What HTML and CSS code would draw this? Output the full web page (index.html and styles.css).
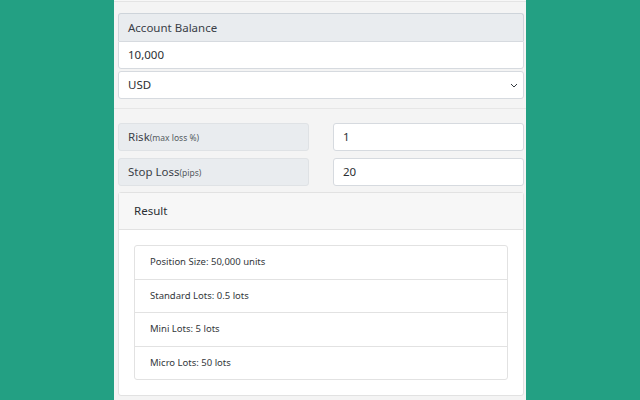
FILE: index.html
```html
<!DOCTYPE html>
<html>
<head>
<meta charset="utf-8">
<link rel="stylesheet" href="styles.css">
</head>
<body>
<div class="panel">
  <div class="top-strip"></div>
  <section class="section balance">
    <div class="group-label">Account Balance</div>
    <div class="field">10,000</div>
    <div class="field select">USD
      <svg class="chev" width="8" height="5" viewBox="0 0 8 5"><path d="M1 1 L4 4 L7 1" fill="none" stroke="#343a40" stroke-width="1"/></svg>
    </div>
  </section>
  <section class="section inputs">
    <div class="pair">
      <div class="label-box">Risk<small>(max loss %)</small></div>
      <div class="field">1</div>
    </div>
    <div class="pair">
      <div class="label-box">Stop Loss<small>(pips)</small></div>
      <div class="field">20</div>
    </div>
    <div class="card">
      <div class="card-header">Result</div>
      <div class="card-body">
        <ul class="list">
          <li>Position Size: 50,000 units</li>
          <li>Standard Lots: 0.5 lots</li>
          <li>Mini Lots: 5 lots</li>
          <li>Micro Lots: 50 lots</li>
        </ul>
      </div>
    </div>
  </section>
</div>
</body>
</html>
```

FILE: styles.css
```css
html, body {
  margin: 0;
  padding: 0;
  height: 100%;
}
body {
  background: #23a083;
  font-family: "Noto Sans", "Open Sans", sans-serif;
  font-size: 12px;
  color: #2b2f33;
  overflow: hidden;
}
.panel {
  width: 412px;
  margin: 0 auto;
  background: #f4f4f4;
  min-height: 400px;
}
.top-strip {
  height: 1px;
  border-bottom: 1px solid #e4e4e4;
  background: #f7f7f7;
}
.section {
  padding: 0 2px 0 4px;
}
.balance {
  padding-top: 11px;
  padding-bottom: 9px;
  border-bottom: 1px solid #e6e6e6;
}
.group-label {
  height: 28px;
  box-sizing: border-box;
  border: 1px solid #ced4da;
  border-bottom: none;
  border-radius: 3px 3px 0 0;
  background: #e9ecef;
  color: #3a4047;
  padding: 0 9px;
  line-height: 28px;
  font-size: 11.5px;
}
.field {
  height: 28px;
  box-sizing: border-box;
  border: 1px solid #d6dadf;
  background: #fff;
  border-radius: 3px;
  padding: 0 9px;
  line-height: 26px;
  color: #2b2f33;
  font-size: 11.5px;
}
.balance .field {
  border-radius: 0 0 3px 3px;
}
.balance .select {
  margin-top: 2px;
  border-radius: 3px;
  position: relative;
}
.chev {
  position: absolute;
  right: 5px;
  top: 11px;
}
.inputs {
  padding-top: 14px;
}
.pair {
  display: grid;
  grid-template-columns: 1fr 1fr;
  column-gap: 24px;
  margin-bottom: 7px;
}
.label-box {
  height: 28px;
  box-sizing: border-box;
  border: 1px solid #dfe2e5;
  background: #e9ecef;
  border-radius: 3px;
  padding: 0 9px;
  line-height: 26px;
  color: #3a4047;
  font-size: 11.5px;
}
.label-box small {
  font-size: 8.5px;
  color: #555b61;
}
.card {
  margin-top: -1px;
  border: 1px solid #e2e2e2;
  border-radius: 3px;
  background: #fff;
}
.card-header {
  background: #f7f7f7;
  border-bottom: 1px solid #e2e2e2;
  padding: 9px 15px;
  line-height: 18px;
  font-size: 11.5px;
}
.card-body {
  padding: 15px;
}
.list {
  list-style: none;
  margin: 0;
  padding: 0;
  border: 1px solid #e2e2e2;
  border-radius: 3px;
}
.list li {
  padding: 9px 15px;
  line-height: 14.5px;
  font-size: 9.5px;
  border-top: 1px solid #e2e2e2;
  color: #33373b;
}
.list li:first-child {
  border-top: none;
}
```
